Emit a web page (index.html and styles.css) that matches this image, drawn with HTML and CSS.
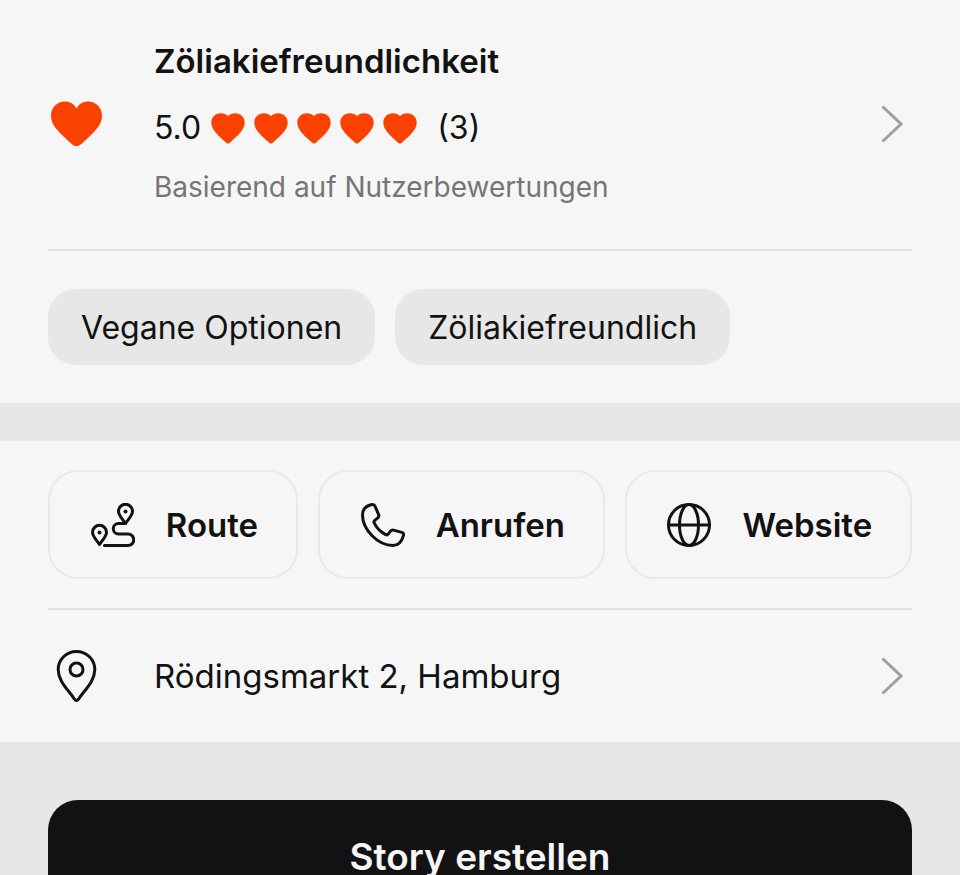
FILE: index.html
```
<!DOCTYPE html>
<html lang="de">
<head>
  <meta charset="utf-8">
  <meta name="viewport" content="width=device-width, initial-scale=1">
  <title>Rödingsmarkt 2, Hamburg</title>
  <link rel="stylesheet" href="styles.css">
</head>
<body>

<!-- Shapes used more than once -->
<svg class="sprite" aria-hidden="true">
  <symbol id="heart" viewBox="0 0 52 46">
    <path d="M26 7.500C23.500 3 19.500.5 14.500.5 6.500.5.5 6.800.5 14.500c0 5 2 9.500 5.500 13.500 4.500 5.300 10 10.500 15.500 15.200 3 2.500 6 2.500 9 0C36 38.500 41.500 33.300 46 28c3.500-4 5.500-8.500 5.500-13.500C51.500 6.800 45.500.5 37.500.5 32.500.5 28.500 3 26 7.500z"/>
  </symbol>
  <symbol id="heart-small" viewBox="0 0 34 31">
    <path d="M17 3.200C15.300 1.200 12.800.3 9.800.3 4.300.3.300 4.300.3 9.600c0 7.500 7 13.200 15.200 20.300 1 .9 2 .9 3 0C26.700 22.800 33.700 17.100 33.700 9.600c0-5.300-4-9.300-9.500-9.300-3 0-5.500.9-7.200 2.900z"/>
  </symbol>
  <symbol id="chevron" viewBox="0 0 22 38">
    <path d="M1.500 1.500 20 19 1.500 36.500"/>
  </symbol>
</svg>

<section class="panel">
  <a class="row rating" href="#bewertungen">
    <span class="row-icon"><svg class="heart-big"><use href="#heart"/></svg></span>
    <div class="row-text">
      <h2>Zöliakiefreundlichkeit</h2>
      <div class="score">
        <span>5.0</span>
        <div class="hearts">
          <svg><use href="#heart-small"/></svg>
          <svg><use href="#heart-small"/></svg>
          <svg><use href="#heart-small"/></svg>
          <svg><use href="#heart-small"/></svg>
          <svg><use href="#heart-small"/></svg>
        </div>
        <span>(3)</span>
      </div>
      <p class="hint">Basierend auf Nutzerbewertungen</p>
    </div>
    <svg class="chevron"><use href="#chevron"/></svg>
  </a>
  <ul class="tags">
    <li>Vegane Optionen</li>
    <li>Zöliakiefreundlich</li>
  </ul>
</section>

<section class="panel">
  <div class="actions">
    <button type="button">
      <svg viewBox="0 0 44 44">
        <path d="M34.500 20.500c-3-4.500-7-8-7-12.200a7 7 0 0 1 14 0c0 4.200-4 7.700-7 12.200zM8.500 41.500c-3-4.500-7-8-7-12.200a7 7 0 0 1 14 0c0 4.200-4 7.700-7 12.200z"/>
        <path d="M34.500 20.500H27.500a5 5 0 0 0 0 10.500h9.500a5.500 5.500 0 0 1 0 11.500H13.500"/>
        <circle class="dot" cx="34.500" cy="8.500" r="2"/>
        <circle class="dot" cx="8.500" cy="29.500" r="2"/>
      </svg>
      Route
    </button>
    <button type="button">
      <svg viewBox="0 0 44 44">
        <path d="M10 1.700c2-.5 3.500 0 4.200 1.800l3.300 7.800c.6 1.400.4 2.600-.7 3.600l-3 2.500c-.8.7-1 1.500-.6 2.500 2.600 5.400 6 8.900 11.500 11.700 1 .5 1.800.3 2.500-.5l2.300-3c.8-1 1.800-1.400 3-1l8.300 2.300c1.500.5 2.100 1.600 1.600 3.200-1.700 6.200-5.500 9.900-10.400 9.900C17 42.500 1.500 26.500 1.500 12 1.500 6.500 5 3 10 1.700z"/>
      </svg>
      Anrufen
    </button>
    <button type="button">
      <svg viewBox="0 0 44 44">
        <circle cx="22" cy="22" r="20.500"/>
        <ellipse cx="22" cy="22" rx="9.500" ry="20.500"/>
        <path d="M1.500 22h41"/>
      </svg>
      Website
    </button>
  </div>
  <a class="row address" href="#karte">
    <span class="row-icon">
      <svg class="pin" viewBox="0 0 40 52">
        <path d="M20 50.500c-1 0-1.500-.6-2-1.300C12 40 1.700 31.500 1.700 19.500a18.300 18 0 0 1 36.600 0c0 12-10.300 20.500-16.300 29.700-.5.700-1 1.300-2 1.300z"/>
        <circle cx="20" cy="19.500" r="6.500"/>
      </svg>
    </span>
    <span class="row-text">Rödingsmarkt 2, Hamburg</span>
    <svg class="chevron"><use href="#chevron"/></svg>
  </a>
</section>

<footer>
  <button type="button" class="story-btn">Story erstellen</button>
</footer>

</body>
</html>
```
FILE: styles.css
```
* {
  box-sizing: border-box;
}
body {
  margin: 0;
  height: 100vh;
  overflow: hidden;
  background-color: #e7e7e7;
  color: #121212;
  font-family: Inter, "Liberation Sans", sans-serif;
  font-size: 33px;
  line-height: 40px;
}
h2, p, ul {
  margin: 0;
  padding: 0;
}
button {
  font: inherit;
  font-weight: 600;
  color: inherit;
  cursor: pointer;
}
svg {
  display: block;
  flex: none;
}
.sprite {
  position: absolute;
  width: 0;
  height: 0;
}
.panel {
  padding: 0 48px;
  margin-bottom: 38px;
  background-color: #f6f6f6;
}

/* Rows with icon, text and chevron */
.row {
  display: flex;
  align-items: center;
  padding-right: 9px;
  color: inherit;
  text-decoration: none;
}
.row-icon {
  width: 106px;
}
.row-text {
  flex: 1;
}
.chevron {
  width: 22px;
  height: 38px;
  fill: none;
  stroke: #a0a0a0;
  stroke-width: 3px;
}

/* Rating */
.rating {
  padding-top: 41px;
  padding-bottom: 42px;
  border-bottom: 2px solid #e2e2e2;
}
.rating h2 {
  font-size: 33px;
  font-weight: 600;
}
.heart-big {
  width: 57px;
  height: 46px;
  fill: #fa4100;
}
.score {
  display: flex;
  align-items: center;
  margin: 27px 0 19px;
  font-size: 32px;
}
.hearts {
  display: flex;
  gap: 9px;
  margin: 0 20px 0 10px;
}
.hearts svg {
  width: 34px;
  height: 31px;
  fill: #fa4100;
}
.hint {
  font-size: 28px;
  color: #757575;
}

/* Tags */
.tags {
  display: flex;
  gap: 20px;
  padding: 38px 0;
  font-size: 32px;
  list-style: none;
}
.tags li {
  padding: 19px 33px 17px;
  border-radius: 28px;
  background-color: #e7e7e7;
}

/* Action buttons */
.actions {
  display: flex;
  gap: 20px;
  padding: 29px 0;
  border-bottom: 2px solid #e2e2e2;
}
.actions button {
  display: flex;
  flex: 1 1 auto;
  align-items: center;
  justify-content: center;
  gap: 31px;
  height: 109px;
  padding: 0 37px 0 40px;
  border: 2px solid #e9e9e9;
  border-radius: 30px;
  background-color: transparent;
}
.actions svg {
  width: 44px;
  height: 44px;
}
.actions svg, .pin {
  fill: none;
  stroke: #121212;
  stroke-width: 3px;
  stroke-linecap: round;
  stroke-linejoin: round;
}
.actions .dot {
  fill: #121212;
  stroke: none;
}

/* Address */
.address {
  padding-top: 40px;
  padding-bottom: 40px;
}
.pin {
  width: 57px;
  height: 52px;
}

/* Story button */
footer {
  padding: 20px 48px 48px;
}
.story-btn {
  width: 100%;
  height: 114px;
  border: none;
  border-radius: 30px;
  background-color: #121212;
  color: #f6f6f6;
  font-size: 37px;
}
```
